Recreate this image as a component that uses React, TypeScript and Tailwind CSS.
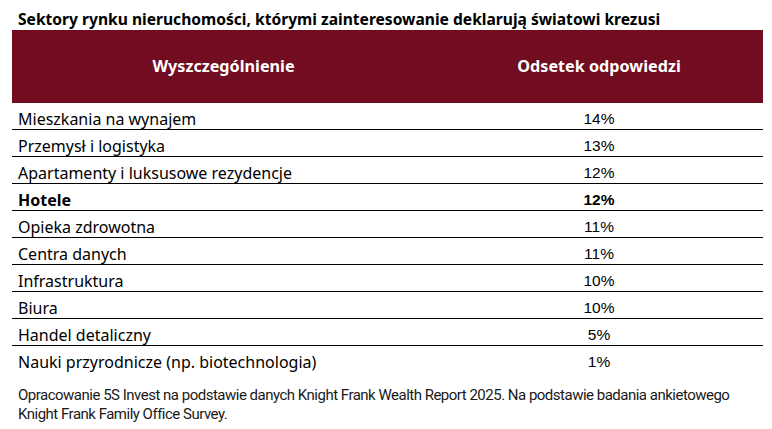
const rows: { name: string; value: string; bold?: boolean }[] = [
  { name: "Mieszkania na wynajem", value: "14%" },
  { name: "Przemysł i logistyka", value: "13%" },
  { name: "Apartamenty i luksusowe rezydencje", value: "12%" },
  { name: "Hotele", value: "12%", bold: true },
  { name: "Opieka zdrowotna", value: "11%" },
  { name: "Centra danych", value: "11%" },
  { name: "Infrastruktura", value: "10%" },
  { name: "Biura", value: "10%" },
  { name: "Handel detaliczny", value: "5%" },
  { name: "Nauki przyrodnicze (np. biotechnologia)", value: "1%" },
];

export default function App() {
  return (
    <div className="w-[772px] h-[429px] bg-white text-black font-['Noto_Sans',sans-serif] pt-[9px]">
      <h1 className="px-[18px] text-[15.6px] font-bold leading-[21px]">
        Sektory rynku nieruchomości, którymi zainteresowanie deklarują światowi krezusi
      </h1>
      <div className="ml-[12px] mr-[9px]">
        <div className="grid grid-cols-[423px_1fr] h-[73px] bg-[#720c20] text-white text-[16.2px] font-bold items-center">
          <div className="text-center">Wyszczególnienie</div>
          <div className="text-center">Odsetek odpowiedzi</div>
        </div>
        {rows.map((r, i) => (
          <div
            key={r.name}
            className={`grid grid-cols-[423px_1fr] h-[27px] items-center text-[16px] leading-[20px] ${
              i < rows.length - 1 ? "border-b border-black" : ""
            } ${r.bold ? "font-bold" : ""}`}
          >
            <div className="pl-[6px] pt-[5px]">{r.name}</div>
            <div className="text-center pt-[5px] text-[15.5px] font-['Liberation_Sans',sans-serif]">{r.value}</div>
          </div>
        ))}
      </div>
      <p className="pl-[18px] pr-[10px] mt-[13px] text-[15px] leading-[19px] tracking-[-0.5px] text-[#1a1a1a] font-['Roboto',sans-serif]">
        Opracowanie 5S Invest na podstawie danych Knight Frank Wealth Report 2025. Na podstawie badania ankietowego
        <br />
        Knight Frank Family Office Survey.
      </p>
    </div>
  );
}
